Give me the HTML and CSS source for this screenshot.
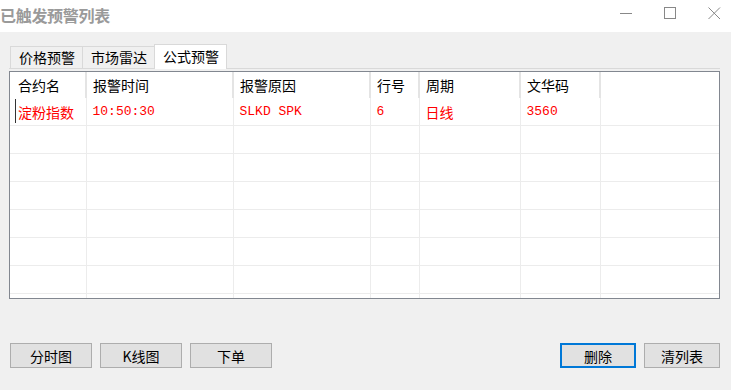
FILE: index.html
```html
<!DOCTYPE html>
<html lang="zh-CN">

<head>
    <meta charset="UTF-8">
    <title>已触发预警列表</title>
    <link rel="stylesheet" href="styles.css">
</head>

<body>
    <div class="window">
        <div class="titlebar">
            <span class="title">已触发预警列表</span>
            <div class="controls">
                <svg class="ctl" width="13" height="13" viewBox="0 0 13 13"><path d="M0 6.5H12" stroke="#888" stroke-width="1"/></svg>
                <svg class="ctl" width="13" height="13" viewBox="0 0 13 13"><rect x="0.5" y="0.5" width="11" height="11" fill="none" stroke="#888" stroke-width="1"/></svg>
                <svg class="ctl" width="13" height="13" viewBox="0 0 13 13"><path d="M0.5 0.5L12 12M12 0.5L0.5 12" stroke="#888" stroke-width="1"/></svg>
            </div>
        </div>

        <div class="main">
            <div class="tabbar">
                <div class="tab">价格预警</div>
                <div class="tab">市场雷达</div>
                <div class="tab active">公式预警</div>
            </div>

            <div class="grid">
                <table>
                    <colgroup>
                        <col style="width:76px">
                        <col style="width:147px">
                        <col style="width:137px">
                        <col style="width:49px">
                        <col style="width:101px">
                        <col style="width:80px">
                        <col>
                    </colgroup>
                    <thead>
                        <tr>
                            <th>合约名</th>
                            <th>报警时间</th>
                            <th>报警原因</th>
                            <th>行号</th>
                            <th>周期</th>
                            <th>文华码</th>
                            <th></th>
                        </tr>
                    </thead>
                    <tbody>
                        <tr class="hit">
                            <td class="focus">淀粉指数</td>
                            <td class="mono">10:50:30</td>
                            <td class="mono">SLKD SPK</td>
                            <td class="mono">6</td>
                            <td>日线</td>
                            <td class="mono">3560</td>
                            <td></td>
                        </tr>
                        <tr><td></td><td></td><td></td><td></td><td></td><td></td><td></td></tr>
                        <tr><td></td><td></td><td></td><td></td><td></td><td></td><td></td></tr>
                        <tr><td></td><td></td><td></td><td></td><td></td><td></td><td></td></tr>
                        <tr><td></td><td></td><td></td><td></td><td></td><td></td><td></td></tr>
                        <tr><td></td><td></td><td></td><td></td><td></td><td></td><td></td></tr>
                        <tr><td></td><td></td><td></td><td></td><td></td><td></td><td></td></tr>
                        <tr><td></td><td></td><td></td><td></td><td></td><td></td><td></td></tr>
                    </tbody>
                </table>
            </div>

            <div class="buttons">
                <div class="group">
                    <button class="btn">分时图</button>
                    <button class="btn">K线图</button>
                    <button class="btn">下单</button>
                </div>
                <div class="group">
                    <button class="btn small default">删除</button>
                    <button class="btn small">清列表</button>
                </div>
            </div>
        </div>
    </div>
</body>

</html>
```

FILE: styles.css
```css
html,
body {
    margin: 0;
    padding: 0;
}

body {
    width: 731px;
    height: 390px;
    overflow: hidden;
    font-family: "Noto Sans CJK SC", "Noto Sans", sans-serif;
    font-size: 14px;
    color: #000;
}

.window {
    width: 731px;
    height: 390px;
    display: flex;
    flex-direction: column;
    background: #f0f0f0;
}

.titlebar {
    height: 32px;
    background: #fff;
    display: flex;
    align-items: center;
    justify-content: space-between;
    flex-shrink: 0;
}

.title {
    font-size: 16px;
    font-weight: bold;
    color: #9a9a9a;
    margin-top: -3px;
    letter-spacing: -0.3px;
}

.controls {
    display: flex;
    gap: 31px;
    margin-right: 10px;
    margin-top: -5px;
}

.ctl {
    display: block;
}

.main {
    flex: 1;
    padding: 13px 11px 0 9px;
    display: flex;
    flex-direction: column;
}

.tabbar {
    display: flex;
    align-items: flex-end;
    height: 23px;
    padding-left: 1px;
    border-bottom: 1px solid #d9d9d9;
}

.tab {
    height: 21px;
    line-height: 20px;
    padding: 0 7px 0 8px;
    border: 1px solid #d9d9d9;
    border-bottom: none;
    margin-right: -1px;
    background: #f0f0f0;
}

.tab.active {
    height: 24px;
    line-height: 23px;
    background: #fff;
    margin-bottom: -1px;
    position: relative;
}

.grid {
    margin-top: 2px;
    height: 226px;
    border: 1px solid #828790;
    background: #fff;
    overflow: hidden;
}

table {
    width: 100%;
    table-layout: fixed;
    border-collapse: collapse;
}

th {
    height: 25px;
    padding: 0 0 0 6px;
    text-align: left;
    font-weight: normal;
    border-right: 2px solid #e4e4e4;
    border-bottom: 1px solid #fff;
}

th:first-child,
td:first-child {
    padding-left: 8px;
}

th:last-child,
td:last-child {
    border-right: none;
}

td {
    height: 27px;
    padding: 0 0 0 6px;
    border-right: 1px solid #ececec;
    border-bottom: 1px solid #ececec;
    white-space: nowrap;
}

.hit td {
    color: #f00;
}

.mono {
    font-family: "Liberation Mono", monospace;
    font-size: 13px;
}

.focus {
    position: relative;
}

.focus::before {
    content: "";
    position: absolute;
    left: 5px;
    top: 1px;
    bottom: 2px;
    width: 1px;
    background: #333;
}

.buttons {
    margin-top: 44px;
    display: flex;
    justify-content: space-between;
}

.group {
    display: flex;
    gap: 8px;
}

.group:first-child {
    margin-left: 1px;
}

.btn {
    width: 82px;
    height: 25px;
    padding: 0;
    background: #e1e1e1;
    border: 1px solid #adadad;
    font-family: "Noto Sans CJK SC", "Noto Sans", sans-serif;
    font-size: 14px;
    color: #000;
}

.btn.small {
    width: 76px;
}

.btn.default {
    border: 2px solid #0078d7;
}
```
